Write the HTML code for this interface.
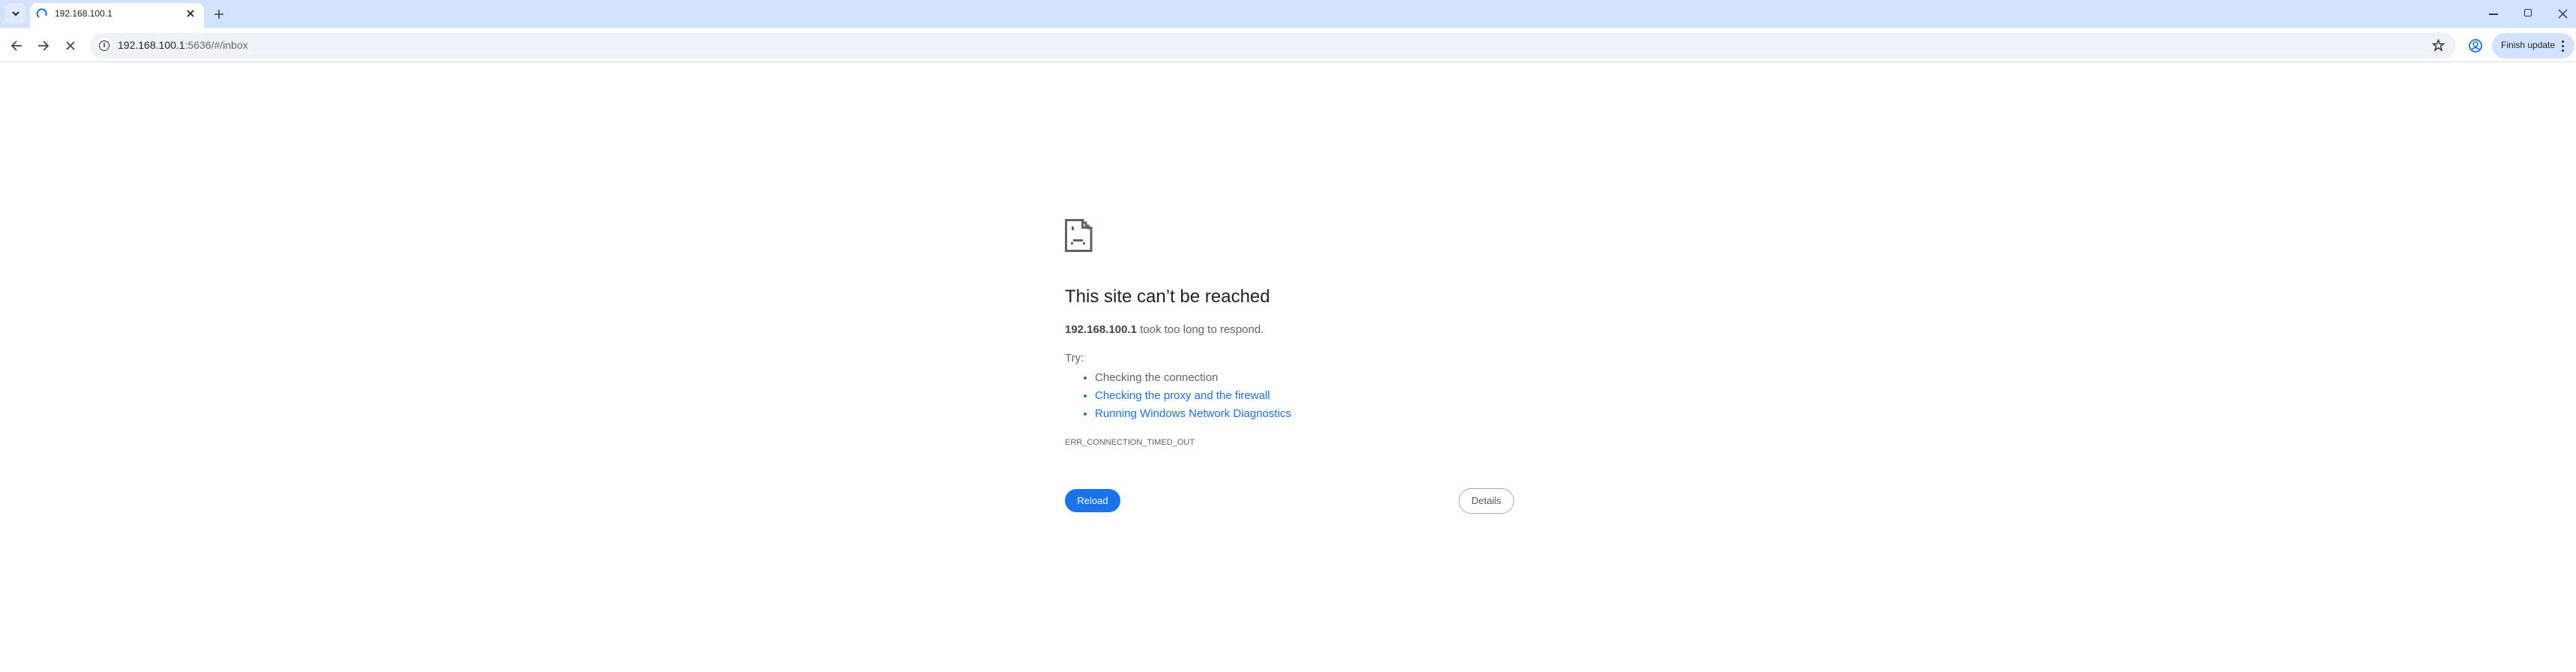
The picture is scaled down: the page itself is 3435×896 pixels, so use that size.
<!DOCTYPE html>
<html><head><style>
*{margin:0;padding:0;box-sizing:border-box}
body{width:3435px;height:896px;background:#fff;font-family:"Liberation Sans",sans-serif;position:relative;overflow:hidden}
.a{position:absolute}
</style></head><body>
<div class="a" style="left:0;top:0;width:3435px;height:37px;background:#d3e3fd"></div>
<div class="a" style="left:7px;top:4px;width:27px;height:28px;background:#e2ebfb;border-radius:8px"></div>
<svg class="a" style="left:14px;top:12px" width="14" height="12"><path d="M3 4l4 4 4-4" stroke="#222" stroke-width="2" fill="none"/></svg>
<div class="a" style="left:40px;top:4px;width:232px;height:37px;background:#fff;border-radius:10px 10px 0 0"></div>
<svg class="a" style="left:47px;top:9px" width="18" height="18"><path d="M5 14A6 6 0 1 1 14 12" stroke="#1a73e8" stroke-width="2" fill="none"/></svg>
<div class="a" style="left:73px;top:11px;font-size:12px;color:#222">192.168.100.1</div>
<svg class="a" style="left:248px;top:12px" width="12" height="12"><path d="M2 2l8 8M10 2l-8 8" stroke="#222" stroke-width="1.8"/></svg>
<svg class="a" style="left:285px;top:12px" width="14" height="14"><path d="M7 1v12M1 7h12" stroke="#444" stroke-width="1.6"/></svg>
<div class="a" style="left:3319px;top:18px;width:12px;height:1.5px;background:#333"></div>
<div class="a" style="left:3366px;top:12px;width:10px;height:10px;border:1.5px solid #333;border-radius:2px"></div>
<svg class="a" style="left:3411px;top:12px" width="13" height="13"><path d="M1 1l11 11M12 1l-11 11" stroke="#333" stroke-width="1.4"/></svg>
<div class="a" style="left:0;top:82px;width:3435px;height:1px;background:#ddd"></div>
<svg class="a" style="left:14px;top:53px" width="16" height="16"><path d="M15 8H2M8 2L2 8l6 6" stroke="#444" stroke-width="1.8" fill="none"/></svg>
<svg class="a" style="left:50px;top:53px" width="16" height="16"><path d="M1 8h13M8 2l6 6-6 6" stroke="#444" stroke-width="1.8" fill="none"/></svg>
<svg class="a" style="left:88px;top:55px" width="12" height="12"><path d="M1 1l10 10M11 1l-10 10" stroke="#444" stroke-width="1.8"/></svg>
<div class="a" style="left:120px;top:44px;width:3155px;height:34px;background:#eef2f9;border-radius:17px"></div>
<div class="a" style="left:128px;top:50px;width:22px;height:22px;background:#fff;border-radius:11px"></div>
<div class="a" style="left:132px;top:54px;width:14px;height:14px;border:1.6px solid #222;border-radius:7px;font-size:9px;font-weight:bold;text-align:center;line-height:11px">i</div>
<div class="a" style="left:157px;top:52px;font-size:14px;color:#222">192.168.100.1<span style="color:#666">:5636/#/inbox</span></div>
<svg class="a" style="left:3243px;top:52px" width="17" height="17"><path d="M8.5 1.5l2 5h5l-4 3.2 1.5 5.3-4.5-3.2-4.5 3.2 1.5-5.3-4-3.2h5z" stroke="#333" stroke-width="1.5" fill="none"/></svg>
<svg class="a" style="left:3291px;top:51px" width="20" height="20"><circle cx="10" cy="10" r="8" stroke="#1a73e8" stroke-width="1.8" fill="none"/><circle cx="10" cy="8" r="3" stroke="#1a73e8" stroke-width="1.6" fill="none"/><path d="M5 15q5-5 10 0" stroke="#1a73e8" stroke-width="1.6" fill="none"/></svg>
<div class="a" style="left:3323px;top:44px;width:110px;height:34px;background:#d3e3fd;border-radius:17px"></div>
<div class="a" style="left:3335px;top:53px;font-size:12px;color:#222">Finish update</div>
<div class="a" style="left:3416px;top:54px;width:3px;height:3px;background:#222;border-radius:2px"></div>
<div class="a" style="left:3416px;top:60px;width:3px;height:3px;background:#222;border-radius:2px"></div>
<div class="a" style="left:3416px;top:66px;width:3px;height:3px;background:#222;border-radius:2px"></div>

<svg class="a" style="left:1420px;top:292px" width="37" height="44"><path d="M1.5 1.5H24V5H28V9H31V12H35V42.5H1.5Z" stroke="#5f6368" stroke-width="3" fill="none"/><rect x="22" y="1" width="3" height="11" fill="#5f6368"/><rect x="22" y="10" width="13" height="3" fill="#5f6368"/><rect x="9" y="10" width="3" height="5" fill="#5f6368"/><rect x="8" y="31" width="3" height="3" fill="#5f6368"/><rect x="11" y="27" width="13" height="3" fill="#5f6368"/><rect x="24" y="31" width="3" height="3" fill="#5f6368"/></svg>
<div class="a" style="left:1420px;top:382px;font-size:24px;color:#202124">This site can’t be reached</div>
<div class="a" style="left:1420px;top:431px;font-size:15px;color:#5f6368"><b style="color:#444">192.168.100.1</b> took too long to respond.</div>
<div class="a" style="left:1420px;top:469px;font-size:15px;color:#5f6368">Try:</div>
<ul class="a" style="left:1460px;top:492px;font-size:15px;color:#5f6368;line-height:24px">
<li>Checking the connection</li>
<li style="color:#1a73e8">Checking the proxy and the firewall</li>
<li style="color:#1a73e8">Running Windows Network Diagnostics</li>
</ul>
<div class="a" style="left:1420px;top:584px;font-size:11px;color:#5f6368">ERR_CONNECTION_TIMED_OUT</div>
<div class="a" style="left:1420px;top:652px;width:74px;height:31px;background:#1a73e8;border-radius:16px;color:#fff;font-size:13px;text-align:center;line-height:31px">Reload</div>
<div class="a" style="left:1945px;top:651px;width:74px;height:34px;border:1px solid #aaa;border-radius:17px;color:#555;font-size:13px;text-align:center;line-height:32px">Details</div>
</body></html>
